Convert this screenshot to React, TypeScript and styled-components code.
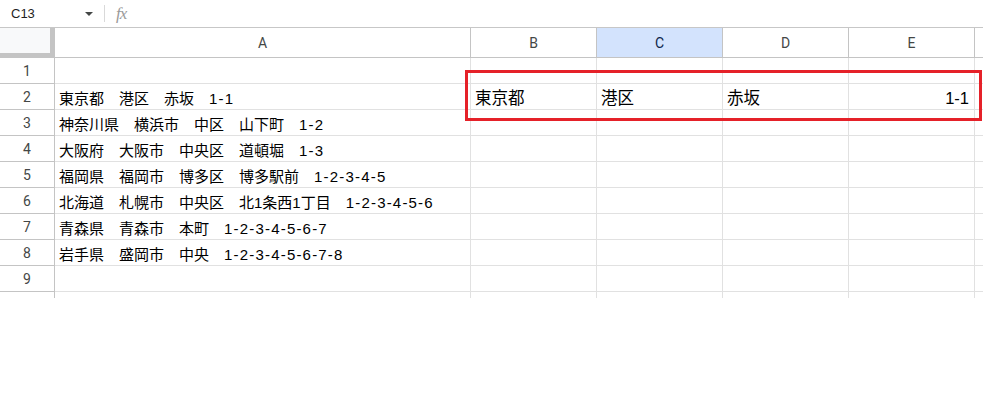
import styled, { createGlobalStyle } from "styled-components";

const GlobalStyle = createGlobalStyle`
  body {
    margin: 0;
    background: #ffffff;
    font-family: "Liberation Sans", "Noto Sans CJK JP", Arial, sans-serif;
    color: #000000;
  }
`;

const Page = styled.div`
  position: relative;
  width: 983px;
  height: 411px;
  overflow: hidden;
  background: #ffffff;
`;

const FormulaBar = styled.div`
  display: flex;
  align-items: center;
  height: 27px;
  border-bottom: 1px solid #c7c7c7;
  font-size: 13px;
  color: #1f1f1f;
`;

const NameBox = styled.div`
  display: flex;
  align-items: center;
  justify-content: space-between;
  width: 82px;
  padding-left: 11px;
  padding-right: 10px;
`;

const Caret = styled.span`
  width: 0;
  height: 0;
  border-left: 4px solid transparent;
  border-right: 4px solid transparent;
  border-top: 4px solid #444746;
`;

const Divider = styled.span`
  width: 1px;
  height: 17px;
  background: #d9d9d9;
  margin-left: 1px;
`;

const Fx = styled.span`
  margin-left: 11px;
  font-family: "Liberation Serif", serif;
  font-style: italic;
  font-size: 17px;
  color: #9a9a9a;
  letter-spacing: -1px;
`;

const Grid = styled.div`
  display: grid;
  grid-template-columns: 55px 416px repeat(4, 126px) 1fr;
  grid-template-rows: 30px repeat(9, 26px) 6px;
`;

const Corner = styled.div`
  background: #f8f9fa;
  border-right: 1px solid #c4c4c4;
  border-bottom: 1px solid #c4c4c4;
  box-shadow: inset -4px -4px 0 #c4c4c4;
`;

const ColHead = styled.div<{ $active?: boolean }>`
  display: flex;
  align-items: center;
  justify-content: center;
  border-right: 1px solid #c4c4c4;
  border-bottom: 1px solid #c4c4c4;
  background: ${(p) => (p.$active ? "#d3e3fd" : "#ffffff")};
  color: ${(p) => (p.$active ? "#0b1f4a" : "#444746")};
  font-family: "Roboto", "Liberation Sans", sans-serif;
  font-size: 14px;
  padding-top: 1px;
`;

const RowHead = styled.div<{ $open?: boolean }>`
  display: flex;
  align-items: center;
  justify-content: center;
  border-right: 1px solid #c4c4c4;
  border-bottom: ${(p) => (p.$open ? "none" : "1px solid #c4c4c4")};
  color: #444746;
  font-family: "Roboto", "Liberation Sans", sans-serif;
  font-size: 14px;
`;

const Cell = styled.div<{ $big?: boolean; $right?: boolean; $open?: boolean }>`
  display: flex;
  align-items: flex-end;
  justify-content: ${(p) => (p.$right ? "flex-end" : "flex-start")};
  padding: 0 5px 3px 4px;
  border-right: 1px solid #e1e1e1;
  border-bottom: ${(p) => (p.$open ? "none" : "1px solid #e1e1e1")};
  font-size: ${(p) => (p.$big ? "16.5px" : "15px")};
  line-height: 1;
  white-space: pre;
  color: #000000;
`;

const Dash = styled.span`
  padding: 0 1.2px;
`;

const Highlight = styled.div`
  position: absolute;
  left: 465px;
  top: 70px;
  width: 511px;
  height: 45px;
  border: 3px solid #e52129;
  pointer-events: none;
`;

const addresses = [
  "",
  "東京都　港区　赤坂　1-1",
  "神奈川県　横浜市　中区　山下町　1-2",
  "大阪府　大阪市　中央区　道頓堀　1-3",
  "福岡県　福岡市　博多区　博多駅前　1-2-3-4-5",
  "北海道　札幌市　中央区　北1条西1丁目　1-2-3-4-5-6",
  "青森県　青森市　本町　1-2-3-4-5-6-7",
  "岩手県　盛岡市　中央　1-2-3-4-5-6-7-8",
  "",
];

const split = ["東京都", "港区", "赤坂", "1-1"];

const columns = ["A", "B", "C", "D", "E", ""];

const withDashes = (text: string) =>
  text.split("-").map((part, i) => (
    <span key={i}>
      {i > 0 && <Dash>-</Dash>}
      {part}
    </span>
  ));

const RowRender = ({ index, text }: { index: number; text: string }) => {
  const isSplit = index === 2;
  return (
    <>
      <RowHead>{index}</RowHead>
      <Cell>{withDashes(text)}</Cell>
      {[0, 1, 2, 3].map((i) => (
        <Cell key={i} $big $right={isSplit && i === 3}>
          {isSplit ? split[i] : ""}
        </Cell>
      ))}
      <Cell />
    </>
  );
};

const App = () => {
  return (
    <Page>
      <GlobalStyle />
      <FormulaBar>
        <NameBox>
          <span>C13</span>
          <Caret />
        </NameBox>
        <Divider />
        <Fx>fx</Fx>
      </FormulaBar>
      <Grid>
        <Corner />
        {columns.map((c, i) => (
          <ColHead key={i} $active={c === "C"}>
            {c}
          </ColHead>
        ))}
        {addresses.map((text, r) => (
          <RowRender key={r} index={r + 1} text={text} />
        ))}
        <RowHead $open />
        {columns.map((_, i) => (
          <Cell key={i} $open />
        ))}
      </Grid>
      <Highlight />
    </Page>
  );
};

export default App;
